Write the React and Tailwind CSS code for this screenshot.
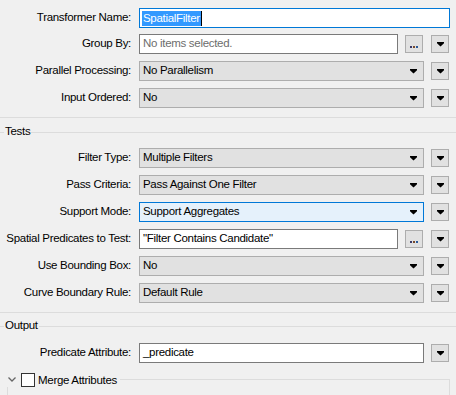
import React from 'react';

const Arrow = () => (
  <svg width="7" height="5" viewBox="0 0 7 5">
    <path d="M0 0H7V1.2L3.5 4.6 0 1.2Z" fill="#000" />
  </svg>
);

const ArrowButton = () => (
  <div className="ml-[7px] flex h-[18px] w-[18px] items-center justify-center border border-[#adadad] bg-[#e1e1e1]">
    <Arrow />
  </div>
);

const DotsButton = () => (
  <div className="ml-[7px] flex h-[18px] w-[18px] items-end justify-center border border-[#adadad] bg-[#e1e1e1] pb-[4px]">
    <div className="flex gap-[1px]">
      <span className="h-[2px] w-[2px] bg-[#3a3a6a]" />
      <span className="h-[2px] w-[2px] bg-[#7a4a2a]" />
      <span className="h-[2px] w-[2px] bg-[#2a5a9a]" />
    </div>
  </div>
);

const Label = ({ children }) => (
  <div className="w-[139px] shrink-0 pr-[8px] text-right">{children}</div>
);

const Select = ({ value, focused }) => (
  <div
    className={
      focused
        ? 'flex h-[20px] w-[285px] items-center justify-between border border-[#0078d7] bg-[#e5f1fb] pl-[3px] pr-[6px]'
        : 'flex h-[20px] w-[285px] items-center justify-between border border-[#adadad] bg-[#e1e1e1] pl-[3px] pr-[6px]'
    }
  >
    <span>{value}</span>
    <Arrow />
  </div>
);

const SelectRow = ({ label, value, focused, className }) => (
  <div className={'flex h-[20px] items-center ' + className}>
    <Label>{label}</Label>
    <Select value={value} focused={focused} />
    <ArrowButton />
  </div>
);

const GroupTitle = ({ children, className }) => (
  <div className={'flex h-[14px] items-center ' + className}>
    <div className="h-px w-[4px] bg-[#dcdcdc]" />
    <span className="px-[1px]">{children}</span>
    <div className="h-px flex-1 bg-[#dcdcdc]" />
  </div>
);

const Separator = ({ className }) => <div className={'h-px bg-[#dcdcdc] ' + className} />;

export default function App() {
  return (
    <div className="h-[395px] w-[456px] overflow-hidden bg-[#f0f0f0] pt-[8px] font-['Liberation_Sans',Arial,sans-serif] text-[11.5px] tracking-[-0.3px] text-black">
      <div className="flex h-[20px] items-center">
        <Label>Transformer Name:</Label>
        <div className="flex h-[20px] w-[311px] items-center border border-[#0078d7] bg-white pl-[2px]">
          <span className="bg-[#3399ff] px-[1px] leading-[15px] text-white">SpatialFilter</span>
          <span className="h-[15px] w-px bg-black" />
        </div>
      </div>

      <div className="mt-[6px] flex h-[20px] items-center">
        <Label>Group By:</Label>
        <div className="flex h-[20px] w-[259px] items-center border border-[#7a7a7a] bg-white pl-[3px] text-[#6d6d6d]">
          No items selected.
        </div>
        <DotsButton />
        <div className="ml-px">
          <ArrowButton />
        </div>
      </div>

      <SelectRow className="mt-[7px]" label="Parallel Processing:" value="No Parallelism" />
      <SelectRow className="mt-[7px]" label="Input Ordered:" value="No" />

      <Separator className="mt-[9px]" />
      <GroupTitle className="mt-[7px]">Tests</GroupTitle>

      <SelectRow className="mt-[9px]" label="Filter Type:" value="Multiple Filters" />
      <SelectRow className="mt-[7px]" label="Pass Criteria:" value="Pass Against One Filter" />
      <SelectRow className="mt-[7px]" label="Support Mode:" value="Support Aggregates" focused />

      <div className="mt-[7px] flex h-[20px] items-center">
        <Label>Spatial Predicates to Test:</Label>
        <div className="flex h-[20px] w-[259px] items-center border border-[#7a7a7a] bg-white pl-[3px]">
          "Filter Contains Candidate"
        </div>
        <DotsButton />
        <div className="ml-px">
          <ArrowButton />
        </div>
      </div>

      <SelectRow className="mt-[7px]" label="Use Bounding Box:" value="No" />
      <SelectRow className="mt-[7px]" label="Curve Boundary Rule:" value="Default Rule" />

      <Separator className="mt-[9px]" />
      <GroupTitle className="mt-[6px]">Output</GroupTitle>

      <div className="mt-[10px] flex h-[20px] items-center">
        <Label>Predicate Attribute:</Label>
        <div className="flex h-[20px] w-[285px] items-center border border-[#7a7a7a] bg-white pl-[3px]">
          _predicate
        </div>
        <ArrowButton />
      </div>

      <div className="mt-[10px] mr-[6px] flex h-[14px] items-start">
        <div className="flex w-[21px] justify-center pl-[3px] pt-[4px]">
          <svg width="8" height="5" viewBox="0 0 8 5">
            <path d="M0.5 0.5L4 4 7.5 0.5" fill="none" stroke="#666" strokeWidth="1.3" />
          </svg>
        </div>
        <div className="h-[14px] w-[14px] border border-[#333] bg-white" />
        <span className="ml-[3px] leading-[14px]">Merge Attributes</span>
        <div className="ml-[3px] mt-[6px] h-[8px] flex-1 border-t border-r border-[#dcdcdc]" />
      </div>
      <div className="ml-[7px] mr-[6px] h-[20px] border-l border-r border-[#dcdcdc]" />
    </div>
  );
}
